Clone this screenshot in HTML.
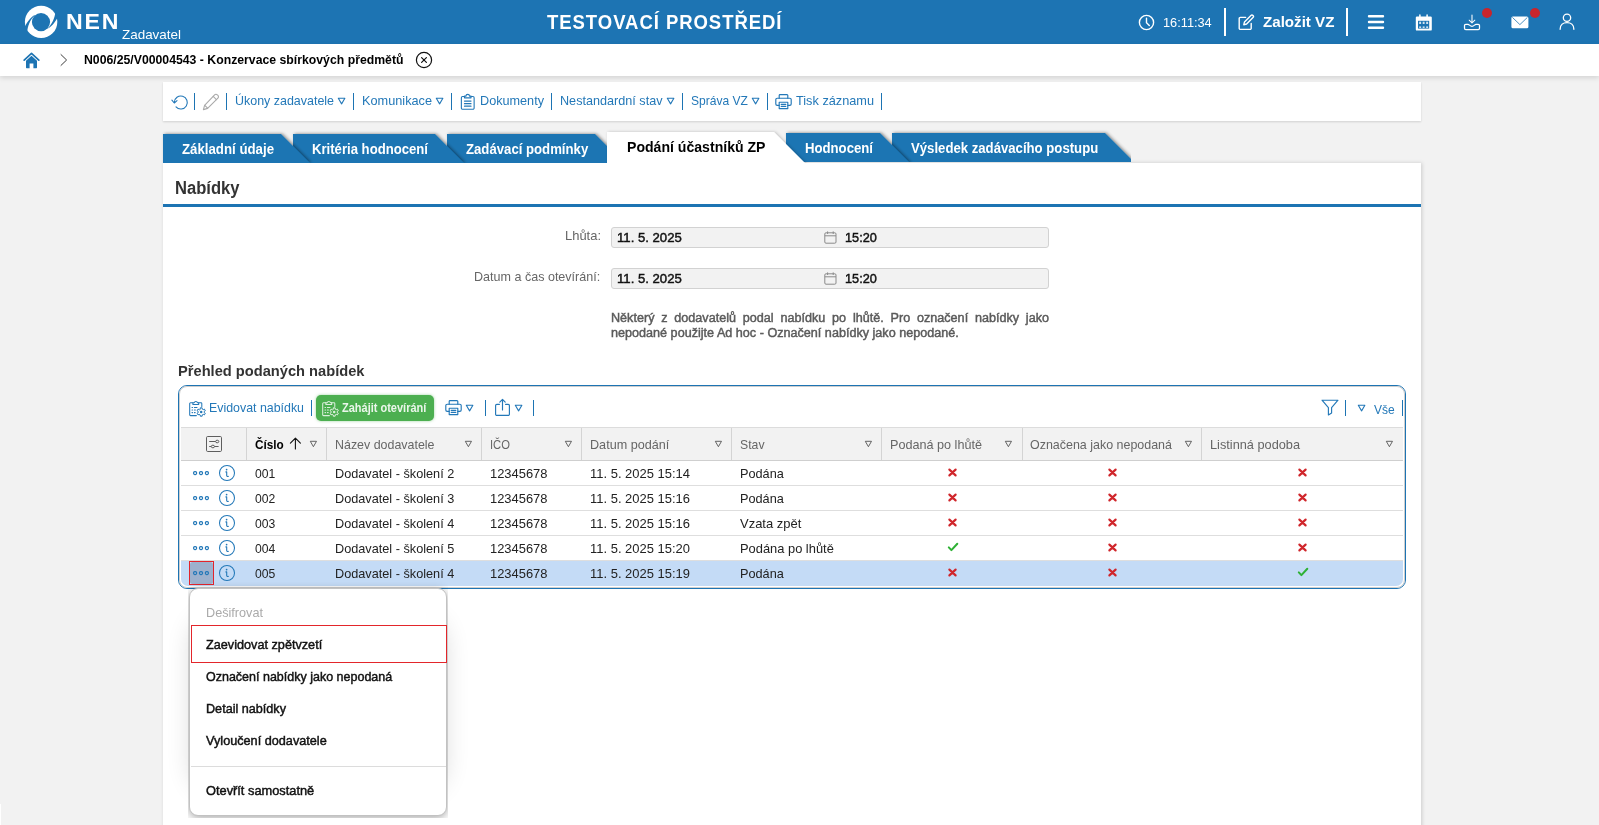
<!DOCTYPE html>
<html lang="cs"><head><meta charset="utf-8"><title>NEN - Nabídky</title>
<style>
html,body{margin:0;padding:0}
body{width:1599px;height:825px;overflow:hidden;position:relative;background:#f2f2f2;font-family:"Liberation Sans", sans-serif;}
.a{position:absolute;display:block}
.t{position:absolute;display:block;white-space:pre;line-height:1;transform-origin:0 50%}
.med{-webkit-text-stroke:0.45px currentColor}
</style></head><body>
<div class="a" style="left:0;top:0;width:1599px;height:44px;background:#1d74b3"></div>
<svg class="a" style="left:23px;top:5px" width="36" height="35" viewBox="0 0 36 35">
<circle cx="18.1" cy="16.9" r="16.2" fill="#fff"/>
<circle cx="18" cy="17.1" r="9.1" fill="#1d74b3"/>
<path d="M11.6 10.1C8.5 11.8 4.6 15.5 1 23.8L4.2 27.6C4.5 21 7 14.6 11.8 10.4Z" fill="#1d74b3"/>
<path d="M24.5 23.8C27.6 22.2 31.6 18.6 35.4 11L32.4 7C31.8 13 29 19.5 24.4 23.5Z" fill="#1d74b3"/>
</svg>
<svg class="a" style="left:1138px;top:13.5px" width="17" height="17" viewBox="0 0 17 17"><circle cx="8.5" cy="8.5" r="7.1" fill="none" stroke="#fff" stroke-width="1.4"/><path d="M8.5 4.2V8.7L11.3 11.6" fill="none" stroke="#fff" stroke-width="1.4" stroke-linecap="round"/></svg>
<i class="a" style="left:1224px;top:8.3px;width:2.2px;height:28.2px;background:#fff"></i>
<svg class="a" style="left:1238px;top:13.5px" width="17" height="17" viewBox="0 0 17 17"><g fill="none" stroke="#fff" stroke-width="1.4" stroke-linejoin="round" stroke-linecap="round"><path d="M7.6 3.4H2.4A1.2 1.2 0 0 0 1.2 4.6V14.2A1.2 1.2 0 0 0 2.4 15.4H12A1.2 1.2 0 0 0 13.2 14.2V9.4"/><path d="M12.9 1.5a1.45 1.45 0 0 1 2.1 2.1L8.6 10l-2.8 0.7 0.7-2.8Z"/></g></svg>
<i class="a" style="left:1346px;top:8.3px;width:2.2px;height:28.2px;background:#fff"></i>
<svg class="a" style="left:1367px;top:14px" width="18" height="16" viewBox="0 0 18 16"><g stroke="#fff" stroke-width="2.4" stroke-linecap="round"><path d="M2 2.2H16M2 8H16M2 13.8H16"/></g></svg>
<svg class="a" style="left:1415px;top:13.5px" width="18" height="17" viewBox="0 0 18 17"><path d="M0.8 3.6a1.2 1.2 0 0 1 1.2-1.2H15.6a1.2 1.2 0 0 1 1.2 1.2V15.4a1.2 1.2 0 0 1-1.2 1.2H2a1.2 1.2 0 0 1-1.2-1.2Z" fill="#fff"/><path d="M4.9 0.9V4M12.1 0.9V4" stroke="#fff" stroke-width="1.5" stroke-linecap="round"/><rect x="3" y="6.8" width="11.2" height="7.8" fill="#1d74b3"/><g fill="#fff" opacity="0.8"><rect x="4.2" y="7.7" width="1.9" height="2.3"/><rect x="7.7" y="7.7" width="1.9" height="2.3"/><rect x="11.2" y="7.7" width="1.9" height="2.3"/><rect x="4.2" y="12.4" width="1.9" height="1.6"/><rect x="7.7" y="12.4" width="1.9" height="1.6"/><rect x="11.2" y="12.4" width="1.9" height="1.6"/></g></svg>
<svg class="a" style="left:1463px;top:13.5px" width="18" height="17" viewBox="0 0 18 17"><g fill="none" stroke="#fff" stroke-width="1.4" stroke-linecap="round" stroke-linejoin="round"><path d="M9 0.9V8.8M6.2 6.2L9 9L11.8 6.2" stroke-width="1.05"/><path d="M2.8 10.3H5C6.2 10.3 7 12.3 9 12.3C11 12.3 11.8 10.3 13 10.3H15.2A1.3 1.3 0 0 1 16.5 11.6V14.2A1.3 1.3 0 0 1 15.2 15.5H2.8A1.3 1.3 0 0 1 1.5 14.2V11.6A1.3 1.3 0 0 1 2.8 10.3Z" stroke-width="1.25"/></g></svg>
<i class="a" style="left:1482px;top:8.2px;width:10px;height:10px;border-radius:50%;background:#c8252c"></i>
<svg class="a" style="left:1510.5px;top:15.6px" width="18" height="14" viewBox="0 0 18 14"><rect x="0.4" y="0.4" width="17" height="11.9" rx="1.5" fill="#fff"/><path d="M1.4 1.4L8.9 8.6L16.4 1.4" fill="none" stroke="#1d74b3" stroke-width="0.8"/></svg>
<i class="a" style="left:1530px;top:8.2px;width:10px;height:10px;border-radius:50%;background:#c8252c"></i>
<svg class="a" style="left:1559.3px;top:13.4px" width="16" height="17" viewBox="0 0 17 18"><g fill="none" stroke="#fff" stroke-width="1.4" stroke-linecap="round"><circle cx="8.5" cy="5" r="3.9"/><path d="M1.2 17.2C1.2 12.6 4.4 10.2 8.5 10.2C12.6 10.2 15.8 12.6 15.8 17.2"/></g></svg>
<div class="a" style="left:0;top:44px;width:1599px;height:31.6px;background:#fff;box-shadow:0 2px 5px rgba(0,0,0,.13)"></div>
<svg class="a" style="left:22.5px;top:51.5px" width="17" height="17" viewBox="0 0 17 17"><path d="M1.2 8.2L8.5 1.4L15.8 8.2" fill="none" stroke="#1d74b3" stroke-width="1.7" stroke-linecap="round" stroke-linejoin="round"/><path d="M3 8.8L8.5 3.8L14 8.8V15.6a0.6 0.6 0 0 1-0.6 0.6H10.4V11.4H6.6V16.2H3.6a0.6 0.6 0 0 1-0.6-0.6Z" fill="#1d74b3"/></svg>
<svg class="a" style="left:59px;top:53px" width="10" height="14" viewBox="0 0 10 14"><path d="M2 1.6L7.6 7L2 12.4" fill="none" stroke="#3c3c3c" stroke-width="1" stroke-linecap="round" stroke-linejoin="round"/></svg>
<svg class="a" style="left:415.2px;top:51px" width="18" height="18" viewBox="0 0 18 18"><circle cx="9" cy="9" r="7.6" fill="none" stroke="#111" stroke-width="1.2"/><path d="M6.6 6.6L11.4 11.4M11.4 6.6L6.6 11.4" stroke="#111" stroke-width="1.2" stroke-linecap="round"/></svg>
<div class="a" style="left:163px;top:82px;width:1258px;height:38.6px;background:#fff;box-shadow:0 1px 2px rgba(0,0,0,.14)"></div>
<svg class="a" style="left:170.5px;top:92.5px" width="18" height="18" viewBox="0 0 18 18"><g fill="none" stroke="#2378b8" stroke-width="1.1" stroke-linecap="round" stroke-linejoin="round"><path d="M3.3 9.4A6.5 6.5 0 1 1 5 13.9"/><path d="M0.9 7.2L3.3 10L6 7.7"/></g></svg>
<i class="a" style="left:194px;top:93px;width:1px;height:16.5px;background:#1d74b3"></i>
<svg class="a" style="left:201.5px;top:92.5px" width="18" height="18" viewBox="0 0 18 18"><g fill="none" stroke="#aaa" stroke-width="1.1" stroke-linejoin="round" stroke-linecap="round"><path d="M12.6 1.8a1.9 1.9 0 0 1 2.7 0l0.6 0.6a1.9 1.9 0 0 1 0 2.7L5.6 15.4 1.4 16.6l1.2-4.2Z"/><path d="M11.2 3.4L14.4 6.6M2.8 12.4L5.6 15.2"/></g></svg>
<i class="a" style="left:226px;top:93px;width:1px;height:16.5px;background:#1d74b3"></i>
<svg class="a" style="left:336.6px;top:97.1px" width="9.2" height="8.2" viewBox="-1 -1 9.2 8.2"><path d="M0.3 0.3H6.9L3.6 5.9Z" fill="none" stroke="#2378b8" stroke-width="1.08" stroke-linejoin="round"/></svg>
<i class="a" style="left:353px;top:93px;width:1px;height:16.5px;background:#1d74b3"></i>
<svg class="a" style="left:435.1px;top:97.1px" width="9.2" height="8.2" viewBox="-1 -1 9.2 8.2"><path d="M0.3 0.3H6.9L3.6 5.9Z" fill="none" stroke="#2378b8" stroke-width="1.08" stroke-linejoin="round"/></svg>
<i class="a" style="left:451px;top:93px;width:1px;height:16.5px;background:#1d74b3"></i>
<svg class="a" style="left:460.4px;top:93px" width="15.5" height="17.4" viewBox="0 0 16 18"><g fill="none" stroke="#2378b8" stroke-width="1.15" stroke-linejoin="round" stroke-linecap="round"><path d="M4.4 3.6H2.6A1.2 1.2 0 0 0 1.4 4.8V15.6A1.2 1.2 0 0 0 2.6 16.8H13.4A1.2 1.2 0 0 0 14.6 15.6V4.8A1.2 1.2 0 0 0 13.4 3.6H11.6"/><path d="M4.6 5V3.2H6.2a1.8 1.8 0 0 1 3.6 0H11.4V5Z"/><path d="M4.6 8.4H11.4M4.6 11H11.4M4.6 13.6H11.4"/></g></svg>
<i class="a" style="left:551px;top:93px;width:1px;height:16.5px;background:#1d74b3"></i>
<svg class="a" style="left:665.6px;top:97.1px" width="9.2" height="8.2" viewBox="-1 -1 9.2 8.2"><path d="M0.3 0.3H6.9L3.6 5.9Z" fill="none" stroke="#2378b8" stroke-width="1.08" stroke-linejoin="round"/></svg>
<i class="a" style="left:682px;top:93px;width:1px;height:16.5px;background:#1d74b3"></i>
<svg class="a" style="left:750.6px;top:97.1px" width="9.2" height="8.2" viewBox="-1 -1 9.2 8.2"><path d="M0.3 0.3H6.9L3.6 5.9Z" fill="none" stroke="#2378b8" stroke-width="1.08" stroke-linejoin="round"/></svg>
<i class="a" style="left:767px;top:93px;width:1px;height:16.5px;background:#1d74b3"></i>
<svg class="a" style="left:775.3px;top:93.3px" width="17" height="17" viewBox="0 0 17 17"><g fill="none" stroke="#2378b8" stroke-width="1.15" stroke-linejoin="round" stroke-linecap="round"><path d="M4.2 5.2V2.4a0.8 0.8 0 0 1 0.8-0.8H12a0.8 0.8 0 0 1 0.8 0.8V5.2"/><path d="M4.2 12.4H2.2A1.4 1.4 0 0 1 0.8 11V6.6A1.4 1.4 0 0 1 2.2 5.2H14.8A1.4 1.4 0 0 1 16.2 6.6V11A1.4 1.4 0 0 1 14.8 12.4H12.8"/><path d="M4.2 9.2H12.8V15.6H4.2Z"/><path d="M6.2 11.4H10.8M6.2 13.4H10.8"/></g></svg>
<i class="a" style="left:881px;top:93px;width:1px;height:16.5px;background:#1d74b3"></i>
<div class="a" style="left:163px;top:162.5px;width:1258px;height:700px;background:#fff;box-shadow:1px 0 4px rgba(0,0,0,.16)"></div>
<svg class="a" style="left:0;top:120px" width="1599" height="50" viewBox="0 120 1599 50"><defs><filter id="ts" x="-5%" y="-30%" width="110%" height="160%"><feDropShadow dx="1.5" dy="-0.3" stdDeviation="1.5" flood-color="#000" flood-opacity="0.42"/></filter><filter id="ta" x="-5%" y="-30%" width="110%" height="160%"><feDropShadow dx="1.2" dy="0" stdDeviation="1.4" flood-color="#000" flood-opacity="0.22"/></filter><clipPath id="tcl"><rect x="150" y="125" width="457" height="37.9"/></clipPath><clipPath id="tcr"><rect x="607" y="125" width="524" height="36.9"/></clipPath><clipPath id="tca"><rect x="600" y="125" width="220" height="38"/></clipPath></defs><g clip-path="url(#tcr)"><polygon points="892,133 1105,133 1135,163 892,163" fill="#1d74b3" filter="url(#ts)"/><polygon points="786,133 880,133 910,163 786,163" fill="#1d74b3" filter="url(#ts)"/></g><g clip-path="url(#tcl)"><polygon points="447,134 595,134 624,163 447,163" fill="#1d74b3" filter="url(#ts)"/><polygon points="293,134 435,134 464,163 293,163" fill="#1d74b3" filter="url(#ts)"/><polygon points="163,134 281,134 310,163 163,163" fill="#1d74b3" filter="url(#ts)"/></g><g clip-path="url(#tca)"><polygon points="607,132 774,132 806,164 607,164" fill="#fff" filter="url(#ta)"/></g></svg>
<div class="a" style="left:163px;top:204px;width:1258px;height:3px;background:#1d74b3"></div>
<div class="a" style="left:611px;top:227px;width:438px;height:20.5px;box-sizing:border-box;background:#f2f2f2;border:1px solid #d2d2d2;border-radius:3px"></div>
<svg class="a" style="left:823.5px;top:230.5px" width="13" height="13" viewBox="0 0 13 13"><g fill="none" stroke="#8a8a8a" stroke-width="1"><rect x="0.8" y="1.8" width="11.2" height="10.4" rx="1.2"/><path d="M0.8 4.8H12M3.6 0.4V3M9.2 0.4V3"/></g></svg>
<div class="a" style="left:611px;top:268px;width:438px;height:20.5px;box-sizing:border-box;background:#f2f2f2;border:1px solid #d2d2d2;border-radius:3px"></div>
<svg class="a" style="left:823.5px;top:271.5px" width="13" height="13" viewBox="0 0 13 13"><g fill="none" stroke="#8a8a8a" stroke-width="1"><rect x="0.8" y="1.8" width="11.2" height="10.4" rx="1.2"/><path d="M0.8 4.8H12M3.6 0.4V3M9.2 0.4V3"/></g></svg>
<div class="a" style="left:178px;top:385px;width:1228px;height:204px;box-sizing:border-box;border:1px solid #1d74b3;border-radius:9px;background:#fff"><div class="a" style="left:0;top:0;right:0;bottom:0;border:1px solid #cecece;border-radius:8px"></div></div>
<svg class="a" style="left:188.5px;top:399.5px" width="17" height="17" viewBox="0 0 17 17"><g fill="none" stroke="#2378b8" stroke-width="1.05" stroke-linejoin="round" stroke-linecap="round"><path d="M7.4 15.6H1.5a0.8 0.8 0 0 1-0.8-0.8V3.6a0.8 0.8 0 0 1 0.8-0.8H3.8M9.8 2.8H12a0.8 0.8 0 0 1 0.8 0.8V6.4"/><path d="M3.9 4.5V2.7H5.2a1.7 1.7 0 0 1 3.3 0H9.7V4.5Z"/><path d="M3 7.4H3.6M5.4 7.4H8M3 10H3.6M5.4 10H6.4M3 12.6H3.6M5.4 12.6H6.2"/><path d="M11.21 9.06L11.26 7.80L13.14 7.80L13.19 9.06L14.25 9.67L15.37 9.09L16.30 10.71L15.24 11.39L15.24 12.61L16.30 13.29L15.37 14.91L14.25 14.33L13.19 14.94L13.14 16.20L11.26 16.20L11.21 14.94L10.15 14.33L9.03 14.91L8.10 13.29L9.16 12.61L9.16 11.39L8.10 10.71L9.03 9.09L10.15 9.67Z" stroke-width="1"/></g><circle cx="12.2" cy="12" r="1.25" fill="#2378b8"/></svg>
<i class="a" style="left:311px;top:399.5px;width:1px;height:16.5px;background:#1d74b3"></i>
<div class="a" style="left:316px;top:395px;width:117.7px;height:25.8px;border-radius:5px;background:#4caf50;box-shadow:0 0 3px rgba(76,175,80,.55)"></div>
<svg class="a" style="left:322px;top:399.5px" width="17" height="17" viewBox="0 0 17 17"><g fill="none" stroke="rgba(255,255,255,.8)" stroke-width="1.05" stroke-linejoin="round" stroke-linecap="round"><path d="M7.4 15.6H1.5a0.8 0.8 0 0 1-0.8-0.8V3.6a0.8 0.8 0 0 1 0.8-0.8H3.8M9.8 2.8H12a0.8 0.8 0 0 1 0.8 0.8V6.4"/><path d="M3.9 4.5V2.7H5.2a1.7 1.7 0 0 1 3.3 0H9.7V4.5Z"/><path d="M3 7.4H3.6M5.4 7.4H8M3 10H3.6M5.4 10H6.4M3 12.6H3.6M5.4 12.6H6.2"/><path d="M11.21 9.06L11.26 7.80L13.14 7.80L13.19 9.06L14.25 9.67L15.37 9.09L16.30 10.71L15.24 11.39L15.24 12.61L16.30 13.29L15.37 14.91L14.25 14.33L13.19 14.94L13.14 16.20L11.26 16.20L11.21 14.94L10.15 14.33L9.03 14.91L8.10 13.29L9.16 12.61L9.16 11.39L8.10 10.71L9.03 9.09L10.15 9.67Z" stroke-width="1"/></g><circle cx="12.2" cy="12" r="1.25" fill="rgba(255,255,255,.8)"/></svg>
<svg class="a" style="left:445.3px;top:399.3px" width="17" height="17" viewBox="0 0 17 17"><g fill="none" stroke="#2378b8" stroke-width="1.15" stroke-linejoin="round" stroke-linecap="round"><path d="M4.2 5.2V2.4a0.8 0.8 0 0 1 0.8-0.8H12a0.8 0.8 0 0 1 0.8 0.8V5.2"/><path d="M4.2 12.4H2.2A1.4 1.4 0 0 1 0.8 11V6.6A1.4 1.4 0 0 1 2.2 5.2H14.8A1.4 1.4 0 0 1 16.2 6.6V11A1.4 1.4 0 0 1 14.8 12.4H12.8"/><path d="M4.2 9.2H12.8V15.6H4.2Z"/><path d="M6.2 11.4H10.8M6.2 13.4H10.8"/></g></svg>
<svg class="a" style="left:465.3px;top:403.8px" width="9.2" height="8.2" viewBox="-1 -1 9.2 8.2"><path d="M0.3 0.3H6.9L3.6 5.9Z" fill="none" stroke="#2378b8" stroke-width="1.08" stroke-linejoin="round"/></svg>
<i class="a" style="left:485px;top:399.5px;width:1px;height:16.5px;background:#1d74b3"></i>
<svg class="a" style="left:494px;top:398px" width="17" height="19" viewBox="0 0 17 19"><g fill="none" stroke="#2378b8" stroke-width="1.15" stroke-linejoin="round" stroke-linecap="round"><path d="M5.4 6.4H2.8A1.2 1.2 0 0 0 1.6 7.6V16.2A1.2 1.2 0 0 0 2.8 17.4H14.2A1.2 1.2 0 0 0 15.4 16.2V7.6A1.2 1.2 0 0 0 14.2 6.4H11.6"/><path d="M8.5 12V1.6M5.8 4.2L8.5 1.4L11.2 4.2"/></g></svg>
<svg class="a" style="left:513.5px;top:403.8px" width="9.2" height="8.2" viewBox="-1 -1 9.2 8.2"><path d="M0.3 0.3H6.9L3.6 5.9Z" fill="none" stroke="#2378b8" stroke-width="1.08" stroke-linejoin="round"/></svg>
<i class="a" style="left:533px;top:399.5px;width:1px;height:16.5px;background:#1d74b3"></i>
<svg class="a" style="left:1321px;top:399.3px" width="18" height="17" viewBox="0 0 18 17"><path d="M1 1.2H17L10.6 8.6V14L7.4 16V8.6Z" fill="none" stroke="#2378b8" stroke-width="1.15" stroke-linejoin="round"/></svg>
<i class="a" style="left:1345px;top:399.5px;width:1px;height:16.5px;background:#1d74b3"></i>
<svg class="a" style="left:1357px;top:404.2px" width="9.2" height="8.2" viewBox="-1 -1 9.2 8.2"><path d="M0.3 0.3H6.9L3.6 5.9Z" fill="none" stroke="#2378b8" stroke-width="1.08" stroke-linejoin="round"/></svg>
<i class="a" style="left:1402px;top:399.5px;width:1px;height:16.5px;background:#1d74b3"></i>
<div class="a" style="left:181px;top:427px;width:1222px;height:34px;box-sizing:border-box;background:#f2f2f2;border-top:1px solid #dcdcdc;border-bottom:1px solid #cfcfcf"></div>
<i class="a" style="left:246.3px;top:428px;width:1px;height:32px;background:#d4d4d4"></i>
<i class="a" style="left:326.3px;top:428px;width:1px;height:32px;background:#d4d4d4"></i>
<i class="a" style="left:481.3px;top:428px;width:1px;height:32px;background:#d4d4d4"></i>
<i class="a" style="left:581.3px;top:428px;width:1px;height:32px;background:#d4d4d4"></i>
<i class="a" style="left:731.3px;top:428px;width:1px;height:32px;background:#d4d4d4"></i>
<i class="a" style="left:881.3px;top:428px;width:1px;height:32px;background:#d4d4d4"></i>
<i class="a" style="left:1021.8px;top:428px;width:1px;height:32px;background:#d4d4d4"></i>
<i class="a" style="left:1201.3px;top:428px;width:1px;height:32px;background:#d4d4d4"></i>
<svg class="a" style="left:206px;top:436px" width="16" height="16" viewBox="0 0 16 16"><g fill="none" stroke="#5e5e5e" stroke-width="1"><rect x="0.5" y="0.5" width="15" height="15" rx="1.2"/><path d="M3.2 5.5H9.6M3.2 10.5H5.2M8.6 10.5H12.6"/><ellipse cx="11.2" cy="5.5" rx="1.6" ry="1.3"/><ellipse cx="6.9" cy="10.5" rx="1.6" ry="1.3"/></g></svg>
<svg class="a" style="left:289px;top:436.8px" width="13" height="13" viewBox="0 0 13 13"><path d="M6.4 12V1.4M1.4 6.2L6.4 1.2L11.4 6.2" fill="none" stroke="#111" stroke-width="1.1" stroke-linecap="round" stroke-linejoin="round"/></svg>
<svg class="a" style="left:308.5px;top:440.2px" width="8.8" height="8" viewBox="-1 -1 8.8 8"><path d="M0.3 0.3H6.5L3.4 5.7Z" fill="none" stroke="#555" stroke-width="0.9" stroke-linejoin="round"/></svg>
<svg class="a" style="left:463.5px;top:440.2px" width="8.8" height="8" viewBox="-1 -1 8.8 8"><path d="M0.3 0.3H6.5L3.4 5.7Z" fill="none" stroke="#555" stroke-width="0.9" stroke-linejoin="round"/></svg>
<svg class="a" style="left:563.8px;top:440.2px" width="8.8" height="8" viewBox="-1 -1 8.8 8"><path d="M0.3 0.3H6.5L3.4 5.7Z" fill="none" stroke="#555" stroke-width="0.9" stroke-linejoin="round"/></svg>
<svg class="a" style="left:713.6px;top:440.2px" width="8.8" height="8" viewBox="-1 -1 8.8 8"><path d="M0.3 0.3H6.5L3.4 5.7Z" fill="none" stroke="#555" stroke-width="0.9" stroke-linejoin="round"/></svg>
<svg class="a" style="left:863.6px;top:440.2px" width="8.8" height="8" viewBox="-1 -1 8.8 8"><path d="M0.3 0.3H6.5L3.4 5.7Z" fill="none" stroke="#555" stroke-width="0.9" stroke-linejoin="round"/></svg>
<svg class="a" style="left:1003.6px;top:440.2px" width="8.8" height="8" viewBox="-1 -1 8.8 8"><path d="M0.3 0.3H6.5L3.4 5.7Z" fill="none" stroke="#555" stroke-width="0.9" stroke-linejoin="round"/></svg>
<svg class="a" style="left:1183.6px;top:440.2px" width="8.8" height="8" viewBox="-1 -1 8.8 8"><path d="M0.3 0.3H6.5L3.4 5.7Z" fill="none" stroke="#555" stroke-width="0.9" stroke-linejoin="round"/></svg>
<svg class="a" style="left:1384.6px;top:440.2px" width="8.8" height="8" viewBox="-1 -1 8.8 8"><path d="M0.3 0.3H6.5L3.4 5.7Z" fill="none" stroke="#555" stroke-width="0.9" stroke-linejoin="round"/></svg>
<div class="a" style="left:181px;top:560.6px;width:1222px;height:25.6px;background:#c4dbf6;border-radius:0 0 7px 7px"></div>
<i class="a" style="left:181px;top:485px;width:1222px;height:1px;background:#dedede"></i>
<i class="a" style="left:181px;top:510px;width:1222px;height:1px;background:#dedede"></i>
<i class="a" style="left:181px;top:535px;width:1222px;height:1px;background:#dedede"></i>
<i class="a" style="left:181px;top:560px;width:1222px;height:1px;background:#dedede"></i>
<div class="a" style="left:189px;top:561px;width:25px;height:24px;box-sizing:border-box;background:#c9e0fa;border:1px solid #e3242b"><div class="a" style="left:0.3px;top:0.3px;right:0.3px;bottom:0.3px;background:#9db1cd;border-radius:2.5px"></div></div>
<svg class="a" style="left:192px;top:469px" width="19" height="8" viewBox="0 0 19 8"><g fill="none" stroke="#2378b8" stroke-width="1.25"><rect x="1.6" y="2.6" width="3" height="2.9" rx="1.2"/><rect x="7.5" y="2.6" width="3" height="2.9" rx="1.2"/><rect x="13.4" y="2.6" width="3" height="2.9" rx="1.2"/></g></svg>
<svg class="a" style="left:218px;top:464px" width="18" height="18" viewBox="0 0 18 18"><circle cx="9" cy="9" r="7.5" fill="none" stroke="#2378b8" stroke-width="1.05"/><path d="M7.9 7.9H8.7V11.6Q8.7 12.6 10.3 12.4" fill="none" stroke="#2378b8" stroke-width="1.1" stroke-linecap="round" stroke-linejoin="round"/><circle cx="8.6" cy="5.6" r="0.85" fill="#2378b8"/></svg>
<svg class="a" style="left:947.0px;top:466.7px" width="11" height="11" viewBox="-5.5 -5.5 11 11"><path d="M-3.1 -2.9L3.1 2.9M3.1 -2.9L-3.1 2.9" stroke="#d0262b" stroke-width="2.2" stroke-linecap="round"/></svg>
<svg class="a" style="left:1107.0px;top:466.7px" width="11" height="11" viewBox="-5.5 -5.5 11 11"><path d="M-3.1 -2.9L3.1 2.9M3.1 -2.9L-3.1 2.9" stroke="#d0262b" stroke-width="2.2" stroke-linecap="round"/></svg>
<svg class="a" style="left:1297.3px;top:466.7px" width="11" height="11" viewBox="-5.5 -5.5 11 11"><path d="M-3.1 -2.9L3.1 2.9M3.1 -2.9L-3.1 2.9" stroke="#d0262b" stroke-width="2.2" stroke-linecap="round"/></svg>
<svg class="a" style="left:192px;top:494px" width="19" height="8" viewBox="0 0 19 8"><g fill="none" stroke="#2378b8" stroke-width="1.25"><rect x="1.6" y="2.6" width="3" height="2.9" rx="1.2"/><rect x="7.5" y="2.6" width="3" height="2.9" rx="1.2"/><rect x="13.4" y="2.6" width="3" height="2.9" rx="1.2"/></g></svg>
<svg class="a" style="left:218px;top:489px" width="18" height="18" viewBox="0 0 18 18"><circle cx="9" cy="9" r="7.5" fill="none" stroke="#2378b8" stroke-width="1.05"/><path d="M7.9 7.9H8.7V11.6Q8.7 12.6 10.3 12.4" fill="none" stroke="#2378b8" stroke-width="1.1" stroke-linecap="round" stroke-linejoin="round"/><circle cx="8.6" cy="5.6" r="0.85" fill="#2378b8"/></svg>
<svg class="a" style="left:947.0px;top:491.7px" width="11" height="11" viewBox="-5.5 -5.5 11 11"><path d="M-3.1 -2.9L3.1 2.9M3.1 -2.9L-3.1 2.9" stroke="#d0262b" stroke-width="2.2" stroke-linecap="round"/></svg>
<svg class="a" style="left:1107.0px;top:491.7px" width="11" height="11" viewBox="-5.5 -5.5 11 11"><path d="M-3.1 -2.9L3.1 2.9M3.1 -2.9L-3.1 2.9" stroke="#d0262b" stroke-width="2.2" stroke-linecap="round"/></svg>
<svg class="a" style="left:1297.3px;top:491.7px" width="11" height="11" viewBox="-5.5 -5.5 11 11"><path d="M-3.1 -2.9L3.1 2.9M3.1 -2.9L-3.1 2.9" stroke="#d0262b" stroke-width="2.2" stroke-linecap="round"/></svg>
<svg class="a" style="left:192px;top:519px" width="19" height="8" viewBox="0 0 19 8"><g fill="none" stroke="#2378b8" stroke-width="1.25"><rect x="1.6" y="2.6" width="3" height="2.9" rx="1.2"/><rect x="7.5" y="2.6" width="3" height="2.9" rx="1.2"/><rect x="13.4" y="2.6" width="3" height="2.9" rx="1.2"/></g></svg>
<svg class="a" style="left:218px;top:514px" width="18" height="18" viewBox="0 0 18 18"><circle cx="9" cy="9" r="7.5" fill="none" stroke="#2378b8" stroke-width="1.05"/><path d="M7.9 7.9H8.7V11.6Q8.7 12.6 10.3 12.4" fill="none" stroke="#2378b8" stroke-width="1.1" stroke-linecap="round" stroke-linejoin="round"/><circle cx="8.6" cy="5.6" r="0.85" fill="#2378b8"/></svg>
<svg class="a" style="left:947.0px;top:516.7px" width="11" height="11" viewBox="-5.5 -5.5 11 11"><path d="M-3.1 -2.9L3.1 2.9M3.1 -2.9L-3.1 2.9" stroke="#d0262b" stroke-width="2.2" stroke-linecap="round"/></svg>
<svg class="a" style="left:1107.0px;top:516.7px" width="11" height="11" viewBox="-5.5 -5.5 11 11"><path d="M-3.1 -2.9L3.1 2.9M3.1 -2.9L-3.1 2.9" stroke="#d0262b" stroke-width="2.2" stroke-linecap="round"/></svg>
<svg class="a" style="left:1297.3px;top:516.7px" width="11" height="11" viewBox="-5.5 -5.5 11 11"><path d="M-3.1 -2.9L3.1 2.9M3.1 -2.9L-3.1 2.9" stroke="#d0262b" stroke-width="2.2" stroke-linecap="round"/></svg>
<svg class="a" style="left:192px;top:544px" width="19" height="8" viewBox="0 0 19 8"><g fill="none" stroke="#2378b8" stroke-width="1.25"><rect x="1.6" y="2.6" width="3" height="2.9" rx="1.2"/><rect x="7.5" y="2.6" width="3" height="2.9" rx="1.2"/><rect x="13.4" y="2.6" width="3" height="2.9" rx="1.2"/></g></svg>
<svg class="a" style="left:218px;top:539px" width="18" height="18" viewBox="0 0 18 18"><circle cx="9" cy="9" r="7.5" fill="none" stroke="#2378b8" stroke-width="1.05"/><path d="M7.9 7.9H8.7V11.6Q8.7 12.6 10.3 12.4" fill="none" stroke="#2378b8" stroke-width="1.1" stroke-linecap="round" stroke-linejoin="round"/><circle cx="8.6" cy="5.6" r="0.85" fill="#2378b8"/></svg>
<svg class="a" style="left:946.5px;top:541.2px" width="12" height="12" viewBox="-6 -6 12 12"><path d="M-4.2 0.4L-1.6 3.1L4.3 -3.3" fill="none" stroke="#2eb135" stroke-width="2" stroke-linecap="round" stroke-linejoin="round"/></svg>
<svg class="a" style="left:1107.0px;top:541.7px" width="11" height="11" viewBox="-5.5 -5.5 11 11"><path d="M-3.1 -2.9L3.1 2.9M3.1 -2.9L-3.1 2.9" stroke="#d0262b" stroke-width="2.2" stroke-linecap="round"/></svg>
<svg class="a" style="left:1297.3px;top:541.7px" width="11" height="11" viewBox="-5.5 -5.5 11 11"><path d="M-3.1 -2.9L3.1 2.9M3.1 -2.9L-3.1 2.9" stroke="#d0262b" stroke-width="2.2" stroke-linecap="round"/></svg>
<svg class="a" style="left:192px;top:569px" width="19" height="8" viewBox="0 0 19 8"><g fill="none" stroke="#2378b8" stroke-width="1.25"><rect x="1.6" y="2.6" width="3" height="2.9" rx="1.2"/><rect x="7.5" y="2.6" width="3" height="2.9" rx="1.2"/><rect x="13.4" y="2.6" width="3" height="2.9" rx="1.2"/></g></svg>
<svg class="a" style="left:218px;top:564px" width="18" height="18" viewBox="0 0 18 18"><circle cx="9" cy="9" r="7.5" fill="none" stroke="#2378b8" stroke-width="1.05"/><path d="M7.9 7.9H8.7V11.6Q8.7 12.6 10.3 12.4" fill="none" stroke="#2378b8" stroke-width="1.1" stroke-linecap="round" stroke-linejoin="round"/><circle cx="8.6" cy="5.6" r="0.85" fill="#2378b8"/></svg>
<svg class="a" style="left:947.0px;top:566.7px" width="11" height="11" viewBox="-5.5 -5.5 11 11"><path d="M-3.1 -2.9L3.1 2.9M3.1 -2.9L-3.1 2.9" stroke="#d0262b" stroke-width="2.2" stroke-linecap="round"/></svg>
<svg class="a" style="left:1107.0px;top:566.7px" width="11" height="11" viewBox="-5.5 -5.5 11 11"><path d="M-3.1 -2.9L3.1 2.9M3.1 -2.9L-3.1 2.9" stroke="#d0262b" stroke-width="2.2" stroke-linecap="round"/></svg>
<svg class="a" style="left:1296.8px;top:566.2px" width="12" height="12" viewBox="-6 -6 12 12"><path d="M-4.2 0.4L-1.6 3.1L4.3 -3.3" fill="none" stroke="#2eb135" stroke-width="2" stroke-linecap="round" stroke-linejoin="round"/></svg>
<div class="a" style="left:200px;top:622px;width:236px;height:160px;border-radius:20px;box-shadow:0 2px 26px 8px rgba(0,0,0,.16)"></div>
<div class="a" style="left:188px;top:580px;width:260px;height:238px;overflow:hidden"><div class="a" style="left:1.3px;top:8.2px;width:257.5px;height:227.4px;box-sizing:border-box;background:#fff;border:1px solid #c2c2c2;border-radius:9px;box-shadow:0 2px 8px rgba(0,0,0,.34)"></div></div>
<div class="a" style="left:191px;top:625px;width:256px;height:38px;box-sizing:border-box;border:1px solid #e3262b"></div>
<i class="a" style="left:190.5px;top:766px;width:255.5px;height:1px;background:#dcdcdc"></i>
<i class="a" style="left:0;top:804px;width:1.3px;height:21px;background:#fff"></i>
<span class="t" style="left:66.00px;top:10.95px;font-size:22.5px;font-weight:700;color:#fff;letter-spacing:1.8px;transform:scaleX(1.0273);">NEN</span>
<span class="t" style="left:122.00px;top:28.17px;font-size:13.5px;font-weight:400;color:#fff;transform:scaleX(0.9950);">Zadavatel</span>
<span class="t" style="left:546.50px;top:12.69px;font-size:19.5px;font-weight:700;color:#fff;letter-spacing:1px;transform:scaleX(0.9495);">TESTOVACÍ PROSTŘEDÍ</span>
<span class="t" style="left:1163.30px;top:16.00px;font-size:13px;font-weight:400;color:#fff;transform:scaleX(0.9811);">16:11:34</span>
<span class="t" style="left:1262.60px;top:13.88px;font-size:15.5px;font-weight:700;color:#fff;transform:scaleX(0.9754);">Založit VZ</span>
<span class="t" style="left:84.00px;top:53.62px;font-size:12.5px;font-weight:700;color:#000;transform:scaleX(0.9804);">N006/25/V00004543 - Konzervace sbírkových předmětů</span>
<span class="t" style="left:235.00px;top:94.30px;font-size:13px;font-weight:400;color:#2378b8;transform:scaleX(0.9580);">Úkony zadavatele</span>
<span class="t" style="left:362.00px;top:94.30px;font-size:13px;font-weight:400;color:#2378b8;transform:scaleX(0.9784);">Komunikace</span>
<span class="t" style="left:480.00px;top:94.30px;font-size:13px;font-weight:400;color:#2378b8;transform:scaleX(0.9734);">Dokumenty</span>
<span class="t" style="left:560.00px;top:94.30px;font-size:13px;font-weight:400;color:#2378b8;transform:scaleX(0.9714);">Nestandardní stav</span>
<span class="t" style="left:690.50px;top:94.30px;font-size:13px;font-weight:400;color:#2378b8;transform:scaleX(0.9280);">Správa VZ</span>
<span class="t" style="left:796.00px;top:94.30px;font-size:13px;font-weight:400;color:#2378b8;transform:scaleX(0.9784);">Tisk záznamu</span>
<span class="t" style="left:182.00px;top:142.15px;font-size:14px;font-weight:700;color:#fff;transform:scaleX(0.9460);">Základní údaje</span>
<span class="t" style="left:312.00px;top:142.15px;font-size:14px;font-weight:700;color:#fff;transform:scaleX(0.9378);">Kritéria hodnocení</span>
<span class="t" style="left:465.80px;top:142.15px;font-size:14px;font-weight:700;color:#fff;transform:scaleX(0.9405);">Zadávací podmínky</span>
<span class="t" style="left:627.00px;top:139.10px;font-size:15px;font-weight:700;color:#000;transform:scaleX(0.9388);">Podání účastníků ZP</span>
<span class="t" style="left:805.00px;top:141.15px;font-size:14px;font-weight:700;color:#fff;transform:scaleX(0.9400);">Hodnocení</span>
<span class="t" style="left:910.80px;top:141.15px;font-size:14px;font-weight:700;color:#fff;transform:scaleX(0.9399);">Výsledek zadávacího postupu</span>
<span class="t" style="left:175.00px;top:179.16px;font-size:18px;font-weight:700;color:#333;transform:scaleX(0.9210);">Nabídky</span>
<span class="t" style="left:564.50px;top:229.00px;font-size:13px;font-weight:400;color:#666;transform:scaleX(0.9957);">Lhůta:</span>
<span class="t" style="left:474.30px;top:270.20px;font-size:13px;font-weight:400;color:#666;transform:scaleX(0.9650);">Datum a čas otevírání:</span>
<span class="t med" style="left:616.50px;top:231.00px;font-size:13px;font-weight:400;color:#111;transform:scaleX(1.0110);">11. 5. 2025</span>
<span class="t med" style="left:844.50px;top:231.00px;font-size:13px;font-weight:400;color:#111;transform:scaleX(0.9771);">15:20</span>
<span class="t med" style="left:616.50px;top:272.00px;font-size:13px;font-weight:400;color:#111;transform:scaleX(1.0110);">11. 5. 2025</span>
<span class="t med" style="left:844.50px;top:272.00px;font-size:13px;font-weight:400;color:#111;transform:scaleX(0.9771);">15:20</span>
<span class="t" style="left:178.00px;top:362.80px;font-size:15px;font-weight:700;color:#333;transform:scaleX(0.9770);">Přehled podaných nabídek</span>
<span class="t med note1" style="left:611.00px;top:312.22px;font-size:12.5px;font-weight:400;color:#5a5a5a;word-spacing:3.244px;transform:scaleX(1.0090);">Některý z dodavatelů podal nabídku po lhůtě. Pro označení nabídky jako</span>
<span class="t med" style="left:611.00px;top:327.22px;font-size:12.5px;font-weight:400;color:#5a5a5a;transform:scaleX(1.0090);">nepodané použijte Ad hoc - Označení nabídky jako nepodané.</span>
<span class="t" style="left:209.30px;top:401.00px;font-size:13px;font-weight:400;color:#2378b8;transform:scaleX(0.9525);">Evidovat nabídku</span>
<span class="t" style="left:342.00px;top:401.84px;font-size:12px;font-weight:700;color:#eaf6ea;transform:scaleX(0.9160);">Zahájit otevírání</span>
<span class="t" style="left:1373.80px;top:403.00px;font-size:13px;font-weight:400;color:#2378b8;transform:scaleX(0.9238);">Vše</span>
<span class="t" style="left:255.00px;top:437.80px;font-size:13px;font-weight:700;color:#000;transform:scaleX(0.9057);">Číslo</span>
<span class="t" style="left:335.00px;top:437.80px;font-size:13px;font-weight:400;color:#666;transform:scaleX(0.9560);">Název dodavatele</span>
<span class="t" style="left:490.00px;top:437.80px;font-size:13px;font-weight:400;color:#666;transform:scaleX(0.8649);">IČO</span>
<span class="t" style="left:590.00px;top:437.80px;font-size:13px;font-weight:400;color:#666;transform:scaleX(0.9710);">Datum podání</span>
<span class="t" style="left:740.00px;top:437.80px;font-size:13px;font-weight:400;color:#666;transform:scaleX(0.9417);">Stav</span>
<span class="t" style="left:890.00px;top:437.80px;font-size:13px;font-weight:400;color:#666;transform:scaleX(0.9715);">Podaná po lhůtě</span>
<span class="t" style="left:1030.00px;top:437.80px;font-size:13px;font-weight:400;color:#666;transform:scaleX(0.9582);">Označena jako nepodaná</span>
<span class="t" style="left:1210.00px;top:437.80px;font-size:13px;font-weight:400;color:#666;transform:scaleX(0.9803);">Listinná podoba</span>
<span class="t" style="left:255.00px;top:467.00px;font-size:13px;font-weight:400;color:#222;transform:scaleX(0.9353);">001</span>
<span class="t" style="left:335.00px;top:467.00px;font-size:13px;font-weight:400;color:#222;transform:scaleX(0.9769);">Dodavatel - školení 2</span>
<span class="t" style="left:490.00px;top:467.00px;font-size:13px;font-weight:400;color:#222;transform:scaleX(0.9941);">12345678</span>
<span class="t" style="left:590.00px;top:467.00px;font-size:13px;font-weight:400;color:#222;transform:scaleX(0.9975);">11. 5. 2025 15:14</span>
<span class="t" style="left:740.00px;top:467.00px;font-size:13px;font-weight:400;color:#222;transform:scaleX(0.9771);">Podána</span>
<span class="t" style="left:255.00px;top:492.00px;font-size:13px;font-weight:400;color:#222;transform:scaleX(0.9353);">002</span>
<span class="t" style="left:335.00px;top:492.00px;font-size:13px;font-weight:400;color:#222;transform:scaleX(0.9769);">Dodavatel - školení 3</span>
<span class="t" style="left:490.00px;top:492.00px;font-size:13px;font-weight:400;color:#222;transform:scaleX(0.9941);">12345678</span>
<span class="t" style="left:590.00px;top:492.00px;font-size:13px;font-weight:400;color:#222;transform:scaleX(0.9975);">11. 5. 2025 15:16</span>
<span class="t" style="left:740.00px;top:492.00px;font-size:13px;font-weight:400;color:#222;transform:scaleX(0.9771);">Podána</span>
<span class="t" style="left:255.00px;top:517.00px;font-size:13px;font-weight:400;color:#222;transform:scaleX(0.9353);">003</span>
<span class="t" style="left:335.00px;top:517.00px;font-size:13px;font-weight:400;color:#222;transform:scaleX(0.9769);">Dodavatel - školení 4</span>
<span class="t" style="left:490.00px;top:517.00px;font-size:13px;font-weight:400;color:#222;transform:scaleX(0.9941);">12345678</span>
<span class="t" style="left:590.00px;top:517.00px;font-size:13px;font-weight:400;color:#222;transform:scaleX(0.9975);">11. 5. 2025 15:16</span>
<span class="t" style="left:740.00px;top:517.00px;font-size:13px;font-weight:400;color:#222;transform:scaleX(0.9978);">Vzata zpět</span>
<span class="t" style="left:255.00px;top:542.00px;font-size:13px;font-weight:400;color:#222;transform:scaleX(0.9353);">004</span>
<span class="t" style="left:335.00px;top:542.00px;font-size:13px;font-weight:400;color:#222;transform:scaleX(0.9769);">Dodavatel - školení 5</span>
<span class="t" style="left:490.00px;top:542.00px;font-size:13px;font-weight:400;color:#222;transform:scaleX(0.9941);">12345678</span>
<span class="t" style="left:590.00px;top:542.00px;font-size:13px;font-weight:400;color:#222;transform:scaleX(0.9975);">11. 5. 2025 15:20</span>
<span class="t" style="left:740.00px;top:542.00px;font-size:13px;font-weight:400;color:#222;transform:scaleX(0.9905);">Podána po lhůtě</span>
<span class="t" style="left:255.00px;top:567.00px;font-size:13px;font-weight:400;color:#222;transform:scaleX(0.9353);">005</span>
<span class="t" style="left:335.00px;top:567.00px;font-size:13px;font-weight:400;color:#222;transform:scaleX(0.9769);">Dodavatel - školení 4</span>
<span class="t" style="left:490.00px;top:567.00px;font-size:13px;font-weight:400;color:#222;transform:scaleX(0.9941);">12345678</span>
<span class="t" style="left:590.00px;top:567.00px;font-size:13px;font-weight:400;color:#222;transform:scaleX(0.9975);">11. 5. 2025 15:19</span>
<span class="t" style="left:740.00px;top:567.00px;font-size:13px;font-weight:400;color:#222;transform:scaleX(0.9771);">Podána</span>
<span class="t" style="left:206.30px;top:606.40px;font-size:13px;font-weight:400;color:#aaa;transform:scaleX(0.9738);">Dešifrovat</span>
<span class="t med" style="left:206.30px;top:638.30px;font-size:13px;font-weight:400;color:#111;transform:scaleX(0.9746);">Zaevidovat zpětvzetí</span>
<span class="t med" style="left:206.30px;top:670.30px;font-size:13px;font-weight:400;color:#111;transform:scaleX(0.9613);">Označení nabídky jako nepodaná</span>
<span class="t med" style="left:206.30px;top:702.30px;font-size:13px;font-weight:400;color:#111;transform:scaleX(0.9710);">Detail nabídky</span>
<span class="t med" style="left:206.30px;top:734.20px;font-size:13px;font-weight:400;color:#111;transform:scaleX(0.9746);">Vyloučení dodavatele</span>
<span class="t med" style="left:206.30px;top:783.50px;font-size:13px;font-weight:400;color:#111;transform:scaleX(0.9852);">Otevřít samostatně</span>
</body></html>
